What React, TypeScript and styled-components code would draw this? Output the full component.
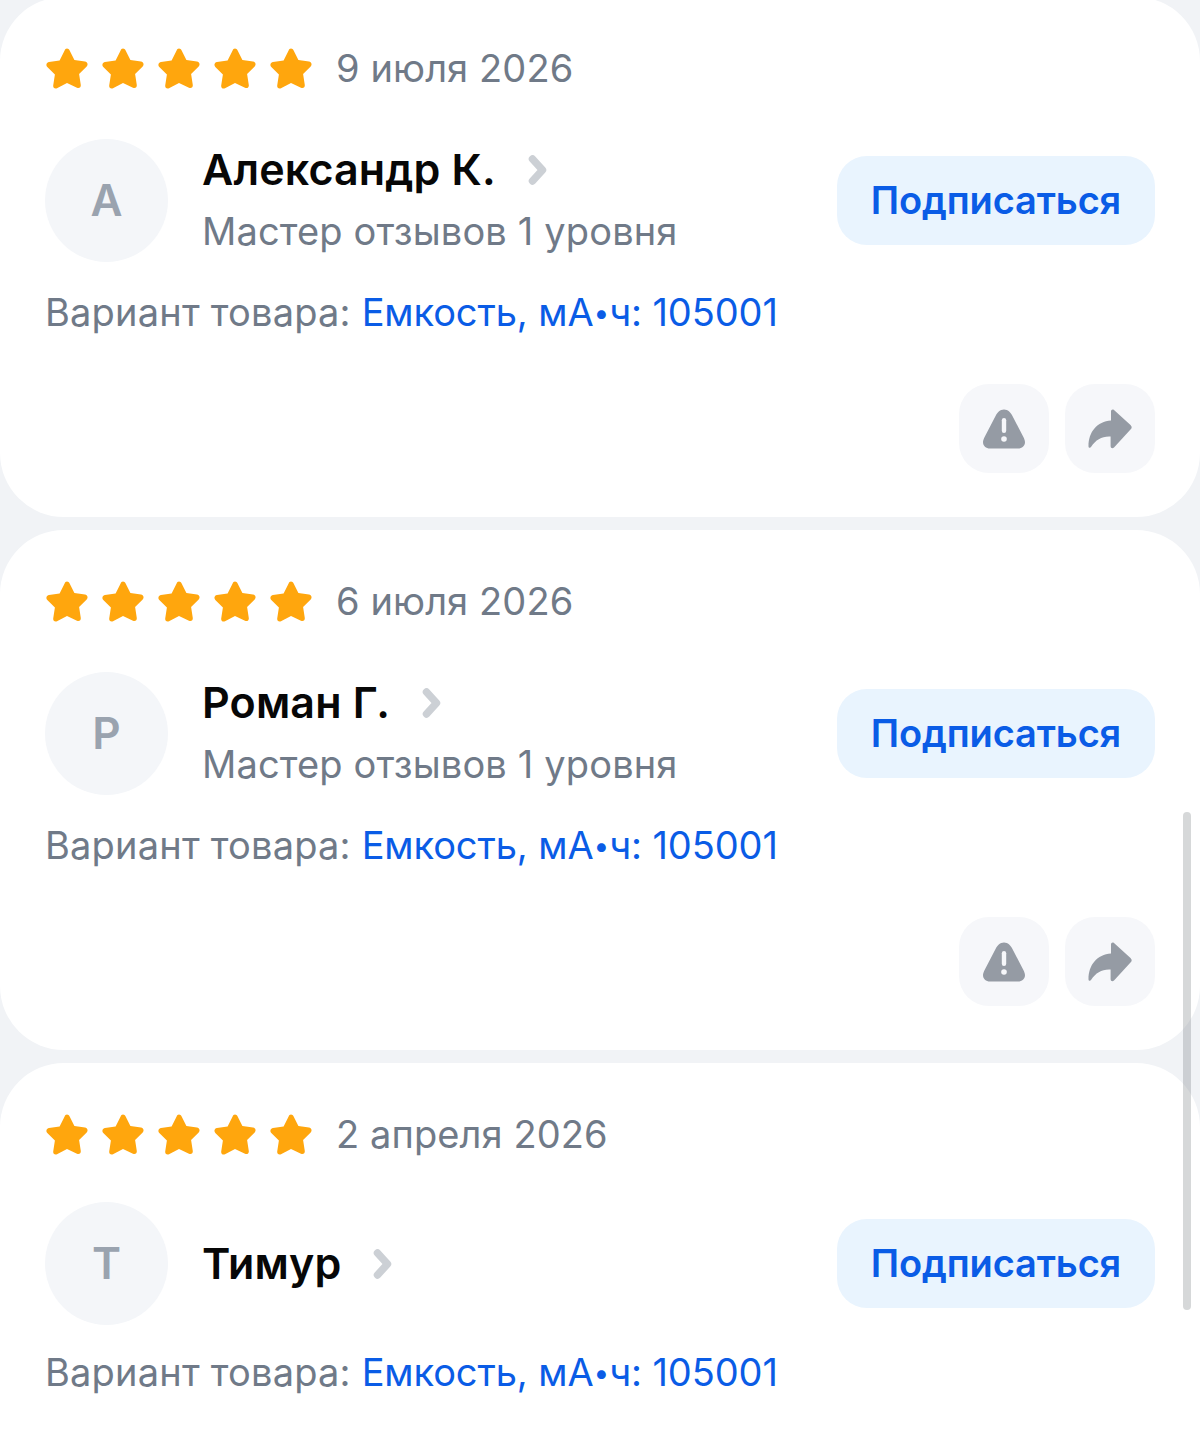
import React from "react";
import styled, { createGlobalStyle } from "styled-components";

const Global = createGlobalStyle`
  html, body { margin: 0; padding: 0; background: #f1f3f6; }
  body { font-family: Inter, "Noto Sans", "Liberation Sans", sans-serif; overflow: hidden; }
`;

const Page = styled.main`
  position: relative;
  height: 1444px;
  overflow: hidden;
`;

const List = styled.div`
  display: flex;
  flex-direction: column;
  gap: 13px;
  margin-top: -3px;
`;

const Card = styled.article`
  height: 520px;
  box-sizing: border-box;
  flex: none;
  background: #fff;
  border-radius: 64px;
  padding: 47px 45px 0;
  display: flex;
  flex-direction: column;
`;

const RatingRow = styled.div`
  display: flex;
  align-items: center;
  height: 48px;
`;

const Stars = styled.div`
  display: flex;
  gap: 10px;
  margin-left: -1px;
  margin-right: 22px;
`;

const DateText = styled.span`
  font-size: 38px;
  color: #707a88;
  letter-spacing: 0.1px;
`;

const AuthorRow = styled.div`
  display: flex;
  align-items: center;
  margin-top: 44px;
`;

const Avatar = styled.div`
  width: 123px;
  height: 123px;
  box-sizing: border-box;
  padding-bottom: 2px;
  flex: none;
  border-radius: 50%;
  background: #f4f6f9;
  color: #9aa3af;
  font-size: 44px;
  font-weight: 600;
  display: flex;
  align-items: center;
  justify-content: center;
  margin-right: 34px;
`;

const AuthorInfo = styled.div`
  flex: 1;
  display: flex;
  flex-direction: column;
  gap: 14px;
  padding: 8.5px 0 10.5px;
`;

const NameLine = styled.div`
  display: flex;
  align-items: center;
  gap: 32px;
`;

const Name = styled.span`
  font-size: 43px;
  line-height: 48px;
  font-weight: 600;
  color: #070707;
  letter-spacing: 0.15px;
`;

const Level = styled.span`
  font-size: 38px;
  line-height: 48px;
  color: #707a88;
  letter-spacing: 0.15px;
`;

const Subscribe = styled.button`
  width: 318px;
  height: 89px;
  flex: none;
  border: 0;
  border-radius: 30px;
  background: #e9f4fe;
  color: #0a5ce6;
  font-family: inherit;
  font-size: 38px;
  font-weight: 600;
  letter-spacing: -0.15px;
  padding: 0 0 2px;
`;

const Variant = styled.p`
  margin: 23px 0 0;
  font-size: 38px;
  line-height: 48px;
  color: #707a88;
  letter-spacing: 0.2px;
`;

const VariantValue = styled.span`
  color: #0a5ce6;
  letter-spacing: -0.1px;
`;

const Bullet = styled.span`
  font-size: 28px;
  line-height: 0;
  vertical-align: 3px;
`;

const Actions = styled.div`
  display: flex;
  justify-content: flex-end;
  gap: 16px;
  margin-top: 48px;
`;

const ActionButton = styled.button`
  width: 90px;
  height: 89px;
  border: 0;
  padding: 0;
  border-radius: 30px;
  background: #f6f7fa;
  display: flex;
  align-items: center;
  justify-content: center;
`;

const Scrollbar = styled.div`
  position: absolute;
  left: 1183px;
  top: 812px;
  width: 8px;
  height: 498px;
  border-radius: 4px;
  background: rgba(120, 125, 130, 0.3);
`;

const ChevronSvg = styled.svg`
  margin-top: 2px;
`;

const Star = () => (
  <svg width="46" height="42" viewBox="0 0 46 42" aria-hidden="true">
    <path
      d="M23 1.5c1.1 0 2 .7 2.5 1.8l4.9 9.6 10.6 1.6c2.5.4 3.4 3.2 1.7 4.9l-7.6 7.5 1.7 11.2c.2 1.800-.9 3-2.500 3-.4 0-.9-.1-1.300-.3L23 36l-10 5.300c-.4.2-.9.3-1.300.3-1.600 0-2.700-1.200-2.500-3l1.700-11.200-7.600-7.500c-1.700-1.700-.8-4.500 1.700-4.900l10.600-1.600 4.900-9.600C21 2.200 21.900 1.500 23 1.500z"
      fill="#ffa60d"
    />
  </svg>
);

const Chevron = () => (
  <ChevronSvg width="20" height="32" viewBox="0 0 20 32" aria-hidden="true">
    <path d="M4.500 5l10 11-10 11" fill="none" stroke="#ccd0d5" strokeWidth="7.500" strokeLinecap="round" strokeLinejoin="round" />
  </ChevronSvg>
);

const WarnIcon = () => (
  <svg width="44" height="40" viewBox="0 0 44 40" aria-hidden="true">
    <path
      d="M22 0.500c4 0 6.400 2.800 8.200 6l10.400 20c1 2 2.400 4.400 2.400 6.500 0 4-3 6.500-7 6.500H8c-4 0-7-2.500-7-6.500 0-2.100 1.400-4.500 2.400-6.500l10.400-20c1.800-3.200 4.200-6 8.200-6z"
      fill="#959ba4"
    />
    <rect x="19.800" y="9" width="4.400" height="15" rx="2.200" fill="#f6f7fa" />
    <circle cx="22" cy="30" r="2.800" fill="#f6f7fa" />
  </svg>
);

const ShareIcon = () => (
  <svg width="44" height="40" viewBox="0 0 44 40" aria-hidden="true">
    <path
      d="M23 2.500c0-1.800 1.600-2.500 3-1.500l16.500 15c1.600 1.500 1.600 3 0 4.500L26 38.500c-1.400 1.300-3.400.8-3.400-1.500v-9.500C14 27 8 30.500 3 38c-.8 1.300-2.500 1-2.500-.8C.5 23 9 12.500 23 11.500z"
      fill="#959ba4"
    />
  </svg>
);

type Review = { date: string; initial: string; name: string; level?: string; actions: boolean };

const reviews: Review[] = [
  { date: "9 июля 2026", initial: "А", name: "Александр К.", level: "Мастер отзывов 1 уровня", actions: true },
  { date: "6 июля 2026", initial: "Р", name: "Роман Г.", level: "Мастер отзывов 1 уровня", actions: true },
  { date: "2 апреля 2026", initial: "Т", name: "Тимур", actions: false },
];

export default function App() {
  return (
    <Page>
      <Global />
      <List>
        {reviews.map((r) => (
          <Card key={r.name}>
            <RatingRow>
              <Stars>
                {[0, 1, 2, 3, 4].map((i) => (
                  <Star key={i} />
                ))}
              </Stars>
              <DateText>{r.date}</DateText>
            </RatingRow>
            <AuthorRow>
              <Avatar>{r.initial}</Avatar>
              <AuthorInfo>
                <NameLine>
                  <Name>{r.name}</Name>
                  <Chevron />
                </NameLine>
                {r.level && <Level>{r.level}</Level>}
              </AuthorInfo>
              <Subscribe>Подписаться</Subscribe>
            </AuthorRow>
            <Variant>
              Вариант товара:{" "}
              <VariantValue>
                Емкость, мА<Bullet>•</Bullet>ч: 105001
              </VariantValue>
            </Variant>
            {r.actions && (
              <Actions>
                <ActionButton aria-label="Пожаловаться">
                  <WarnIcon />
                </ActionButton>
                <ActionButton aria-label="Поделиться">
                  <ShareIcon />
                </ActionButton>
              </Actions>
            )}
          </Card>
        ))}
      </List>
      <Scrollbar />
    </Page>
  );
}
